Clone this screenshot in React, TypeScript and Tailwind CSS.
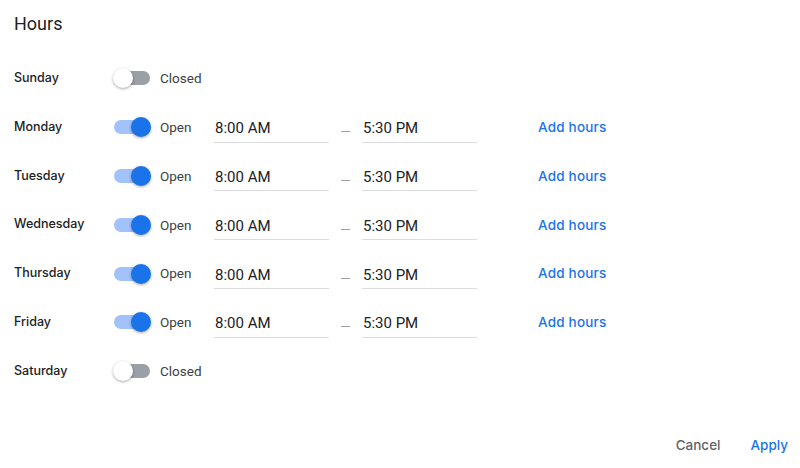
import React, { useState } from 'react';

type Day = { name: string; open: boolean };

const initialDays: Day[] = [
    { name: 'Sunday', open: false },
    { name: 'Monday', open: true },
    { name: 'Tuesday', open: true },
    { name: 'Wednesday', open: true },
    { name: 'Thursday', open: true },
    { name: 'Friday', open: true },
    { name: 'Saturday', open: false },
];

function Toggle({ on, onClick }: { on: boolean; onClick: () => void }) {
    return (
        <button
            onClick={onClick}
            className="relative w-[38px] h-[20px] flex items-center shrink-0"
        >
            <span
                className={`absolute left-[1px] right-[1px] h-[14px] rounded-full ${on ? 'bg-[#a1c2fa]' : 'bg-[#9aa0a6]'}`}
            />
            <span
                className={`absolute top-0 w-[20px] h-[20px] rounded-full shadow-[0_1px_3px_rgba(0,0,0,0.35)] ${on ? 'right-0 bg-[#1a73e8]' : 'left-0 bg-white'}`}
            />
        </button>
    );
}

function TimeField({ value }: { value: string }) {
    return (
        <div className="w-[115px] h-[31px] border-b border-[#dadce0] flex items-end pb-[2px] pl-[1px] text-[15px] text-[#202124]">
            {value}
        </div>
    );
}

export default function App() {
    const [days, setDays] = useState(initialDays);

    const flip = (i: number) =>
        setDays(d => d.map((x, j) => (j === i ? { ...x, open: !x.open } : x)));

    return (
        <div className="w-[800px] h-[468px] bg-white flex flex-col font-['Roboto',sans-serif] text-[#202124]">
            <h1 className="pl-[14px] pt-[12px] text-[18px] leading-[24px]">Hours</h1>

            <div className="flex flex-col mt-[18px]">
                {days.map((d, i) => (
                    <div key={d.name} className="h-[48.8px] flex items-center pl-[14px]">
                        <div className="w-[99px] font-['Inter',sans-serif] text-[12.5px] font-medium">{d.name}</div>
                        <Toggle on={d.open} onClick={() => flip(i)} />
                        <div className="w-[63px] pl-[9px] text-[13.5px] text-[#3c4043]">
                            {d.open ? 'Open' : 'Closed'}
                        </div>
                        {d.open && (
                            <>
                                <TimeField value="8:00 AM" />
                                <div className="w-[33px] flex justify-center pt-[9px]">
                                    <span className="w-[9px] h-[1px] bg-[#9aa0a6]" />
                                </div>
                                <TimeField value="5:30 PM" />
                                <button className="ml-[61px] font-['Inter',sans-serif] text-[13.5px] font-medium tracking-[0.2px] text-[#1a73e8]">
                                    Add hours
                                </button>
                            </>
                        )}
                    </div>
                ))}
            </div>

            <div className="mt-auto mb-[13px] flex justify-end items-center pr-[12px] gap-[30px] font-['Inter',sans-serif] text-[13.5px] font-medium">
                <button className="text-[#5f6368]">Cancel</button>
                <button className="text-[#1a73e8]">Apply</button>
            </div>
        </div>
    );
}
